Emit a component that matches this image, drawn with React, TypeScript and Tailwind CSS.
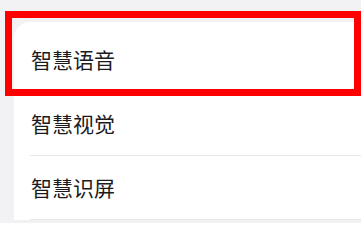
import React from 'react';

const items = ['智慧语音', '智慧视觉', '智慧识屏'];

const App = () => {
  return (
    <div className="relative h-[223px] w-[361px] overflow-hidden bg-[#f2f2f4] pt-[22px] pl-[14px]" style={{ fontFamily: '"Noto Sans CJK SC", "Noto Sans", sans-serif' }}>
      <div className="rounded-tl-2xl bg-white pt-[6px] pl-[16px]">
        {items.map((item) => (
          <div key={item} className="flex h-[64px] items-center border-b border-[#e8e8ea] pl-[1px] text-[21px] leading-none text-[#1c1c1e]">
            {item}
          </div>
        ))}
      </div>
      {/* highlight box over the first row */}
      <div className="absolute left-[5px] top-[11px] h-[85px] w-[356px] border-[7px] border-[#ff0000]" />
    </div>
  );
};

export default App;
